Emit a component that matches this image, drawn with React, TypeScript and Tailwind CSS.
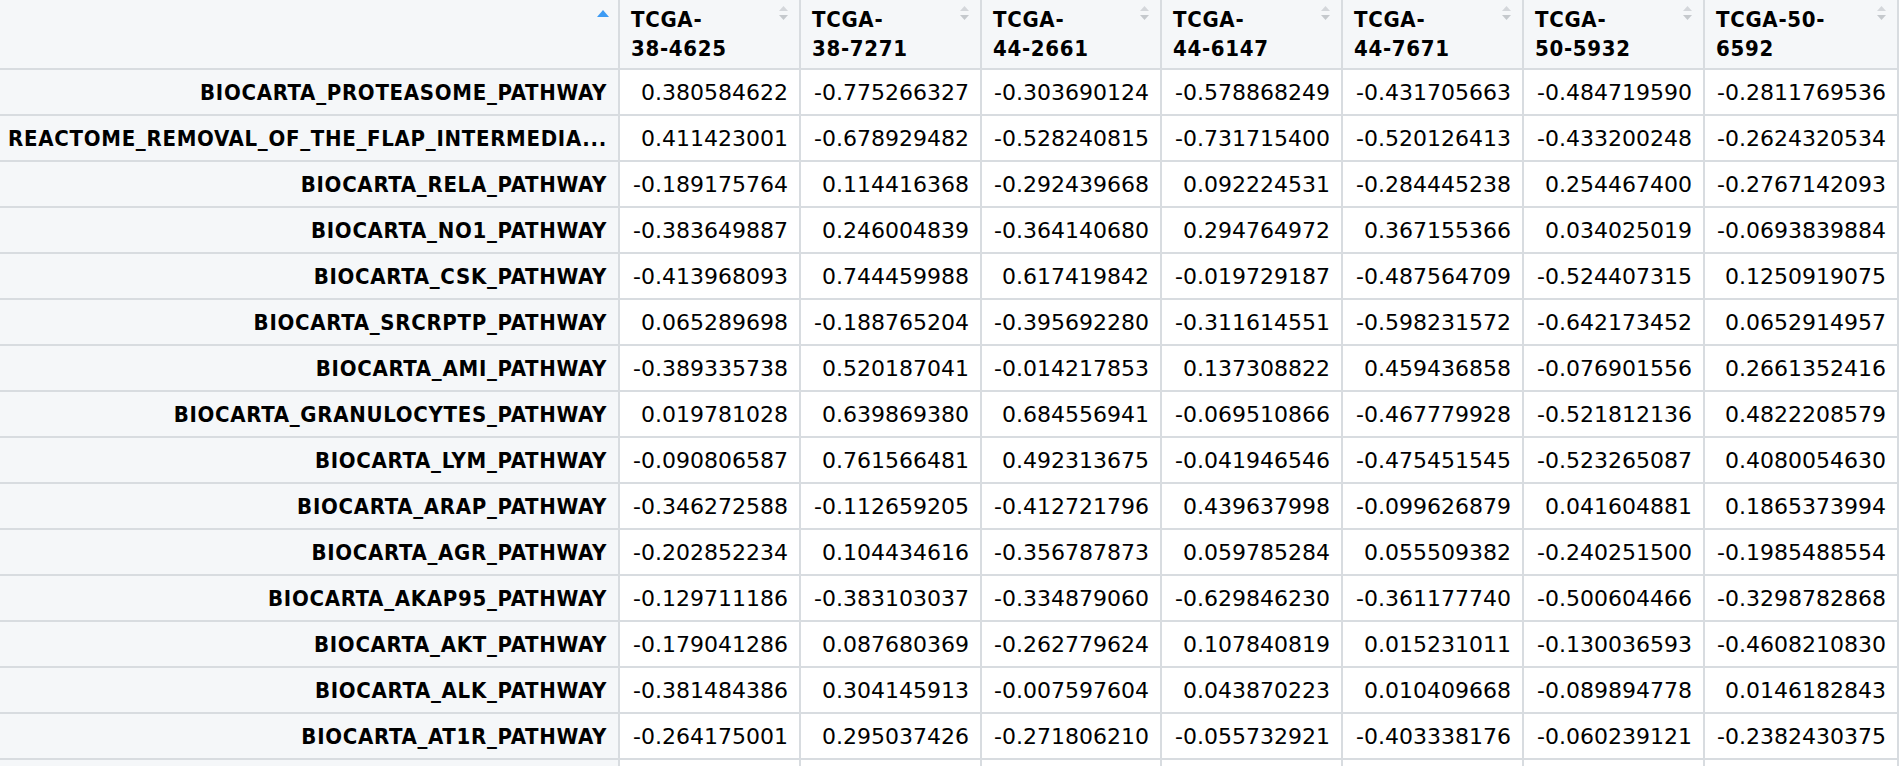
import React from "react";

const samples = [
  ["TCGA-", "38-4625"],
  ["TCGA-", "38-7271"],
  ["TCGA-", "44-2661"],
  ["TCGA-", "44-6147"],
  ["TCGA-", "44-7671"],
  ["TCGA-", "50-5932"],
  ["TCGA-50-", "6592"],
];

const rows: { name: string; full?: string; values: string[] }[] = [
  { name: "BIOCARTA_PROTEASOME_PATHWAY", values: ["0.380584622", "-0.775266327", "-0.303690124", "-0.578868249", "-0.431705663", "-0.484719590", "-0.2811769536"] },
  {
    name: "REACTOME_REMOVAL_OF_THE_FLAP_INTERMEDIA...",
    full: "REACTOME_REMOVAL_OF_THE_FLAP_INTERMEDIATE_FROM_TEMPLATE_STRAND",
    values: ["0.411423001", "-0.678929482", "-0.528240815", "-0.731715400", "-0.520126413", "-0.433200248", "-0.2624320534"],
  },
  { name: "BIOCARTA_RELA_PATHWAY", values: ["-0.189175764", "0.114416368", "-0.292439668", "0.092224531", "-0.284445238", "0.254467400", "-0.2767142093"] },
  { name: "BIOCARTA_NO1_PATHWAY", values: ["-0.383649887", "0.246004839", "-0.364140680", "0.294764972", "0.367155366", "0.034025019", "-0.0693839884"] },
  { name: "BIOCARTA_CSK_PATHWAY", values: ["-0.413968093", "0.744459988", "0.617419842", "-0.019729187", "-0.487564709", "-0.524407315", "0.1250919075"] },
  { name: "BIOCARTA_SRCRPTP_PATHWAY", values: ["0.065289698", "-0.188765204", "-0.395692280", "-0.311614551", "-0.598231572", "-0.642173452", "0.0652914957"] },
  { name: "BIOCARTA_AMI_PATHWAY", values: ["-0.389335738", "0.520187041", "-0.014217853", "0.137308822", "0.459436858", "-0.076901556", "0.2661352416"] },
  { name: "BIOCARTA_GRANULOCYTES_PATHWAY", values: ["0.019781028", "0.639869380", "0.684556941", "-0.069510866", "-0.467779928", "-0.521812136", "0.4822208579"] },
  { name: "BIOCARTA_LYM_PATHWAY", values: ["-0.090806587", "0.761566481", "0.492313675", "-0.041946546", "-0.475451545", "-0.523265087", "0.4080054630"] },
  { name: "BIOCARTA_ARAP_PATHWAY", values: ["-0.346272588", "-0.112659205", "-0.412721796", "0.439637998", "-0.099626879", "0.041604881", "0.1865373994"] },
  { name: "BIOCARTA_AGR_PATHWAY", values: ["-0.202852234", "0.104434616", "-0.356787873", "0.059785284", "0.055509382", "-0.240251500", "-0.1985488554"] },
  { name: "BIOCARTA_AKAP95_PATHWAY", values: ["-0.129711186", "-0.383103037", "-0.334879060", "-0.629846230", "-0.361177740", "-0.500604466", "-0.3298782868"] },
  { name: "BIOCARTA_AKT_PATHWAY", values: ["-0.179041286", "0.087680369", "-0.262779624", "0.107840819", "0.015231011", "-0.130036593", "-0.4608210830"] },
  { name: "BIOCARTA_ALK_PATHWAY", values: ["-0.381484386", "0.304145913", "-0.007597604", "0.043870223", "0.010409668", "-0.089894778", "0.0146182843"] },
  { name: "BIOCARTA_AT1R_PATHWAY", values: ["-0.264175001", "0.295037426", "-0.271806210", "-0.055732921", "-0.403338176", "-0.060239121", "-0.2382430375"] },
];

const bold =
  "font-['DejaVu_Sans_Condensed','DejaVu_Sans',sans-serif] font-bold tracking-[0.7px] [font-stretch:condensed]";

function SortBoth() {
  return (
    <svg width="9" height="15" viewBox="0 0 9 15" className="mt-[1px] shrink-0">
      <polygon points="0,5 4.5,0 9,5" fill="#d4d7db" />
      <polygon points="0,9 9,9 4.5,14" fill="#c5c9cd" />
    </svg>
  );
}

function SortAsc() {
  return (
    <svg width="12" height="7" viewBox="0 0 12 7" className="mt-[5px] shrink-0">
      <polygon points="0,7 6,0 12,7" fill="#3d9bf4" />
    </svg>
  );
}

export default function App() {
  return (
    <div className="min-h-screen bg-white text-black">
      <div className="grid w-max grid-cols-[618px_179px_179px_178px_179px_179px_179px_192px] gap-[2px] border-r-2 border-[#d8dce0] bg-[#d8dce0] font-['DejaVu_Sans',sans-serif] text-[22px]">
        <div className="flex h-[68px] justify-end bg-[#f5f7f9] pr-[9px] pt-[5px]">
          <SortAsc />
        </div>
        {samples.map((s) => (
          <div
            key={s.join("")}
            className="flex h-[68px] items-start justify-between bg-[#f5f7f9] pl-[11px] pr-[11px] pt-[5px]"
          >
            <div className={`${bold} leading-[29px]`}>
              <div>{s[0]}</div>
              <div>{s[1]}</div>
            </div>
            <SortBoth />
          </div>
        ))}

        {rows.map((r) => (
          <React.Fragment key={r.name}>
            <div
              title={r.full ?? r.name}
              className={`flex h-[44px] items-center justify-end overflow-hidden whitespace-nowrap bg-[#f5f7f9] pl-[8px] pr-[11px] ${bold}`}
            >
              {r.name}
            </div>
            {r.values.map((v, i) => (
              <div
                key={i}
                className="flex h-[44px] items-center justify-end whitespace-nowrap bg-white pr-[11px]"
              >
                {v}
              </div>
            ))}
          </React.Fragment>
        ))}

        {/* next row, mostly below the fold */}
        <div className="h-[44px] bg-[#f5f7f9]" />
        {samples.map((s) => (
          <div key={"n" + s.join("")} className="h-[44px] bg-white" />
        ))}
      </div>
    </div>
  );
}
